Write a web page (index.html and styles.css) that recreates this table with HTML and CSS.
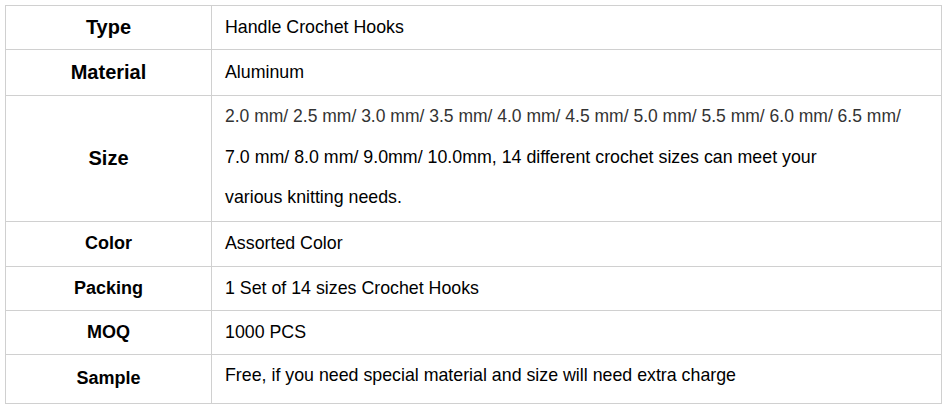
FILE: index.html
```html
<!DOCTYPE html>
<html>
<head>
<meta charset="utf-8">
<link rel="stylesheet" href="styles.css">
</head>
<body>
<table class="spec">
  <tr class="r1"><th class="big">Type</th><td>Handle Crochet Hooks</td></tr>
  <tr class="r2"><th class="big">Material</th><td>Aluminum</td></tr>
  <tr class="r3"><th class="big">Size</th><td class="multi"><span class="grey">2.0 mm/ 2.5 mm/ 3.0 mm/ 3.5 mm/ 4.0 mm/ 4.5 mm/ 5.0 mm/ 5.5 mm/ 6.0 mm/ 6.5 mm/</span><br>7.0 mm/ 8.0 mm/ 9.0mm/ 10.0mm, 14 different crochet sizes can meet your<br>various knitting needs.</td></tr>
  <tr class="r4"><th>Color</th><td>Assorted Color</td></tr>
  <tr class="r5"><th>Packing</th><td>1 Set of 14 sizes Crochet Hooks</td></tr>
  <tr class="r6"><th>MOQ</th><td>1000 PCS</td></tr>
  <tr class="r7"><th>Sample</th><td class="raised">Free, if you need special material and size will need extra charge</td></tr>
</table>
</body>
</html>
```

FILE: styles.css
```css
html, body {
  margin: 0;
  padding: 0;
  background: #fff;
}
body {
  padding: 5px;
  font-family: "Liberation Sans", Arial, sans-serif;
  color: #000;
}
.spec {
  border-collapse: collapse;
  width: 937px;
  table-layout: fixed;
}
.spec th, .spec td {
  border: 1px solid #d0d0d0;
  padding: 0;
  vertical-align: middle;
}
.spec th {
  width: 205px;
  font-size: 18px;
  font-weight: bold;
  text-align: center;
}
.spec th.big {
  font-size: 20px;
}
.spec td {
  font-size: 17.8px;
  text-align: left;
  padding-left: 13px;
}
.spec td.multi {
  line-height: 40.5px;
  padding-bottom: 3px;
}
.spec td.raised {
  padding-bottom: 6px;
}
.grey {
  color: #333;
  font-size: 17.5px;
}
.r1 { height: 44px; }
.r2 { height: 46px; }
.r3 { height: 125px; }
.r4 { height: 45px; }
.r5 { height: 44px; }
.r6 { height: 44px; }
.r7 { height: 49px; }
```
